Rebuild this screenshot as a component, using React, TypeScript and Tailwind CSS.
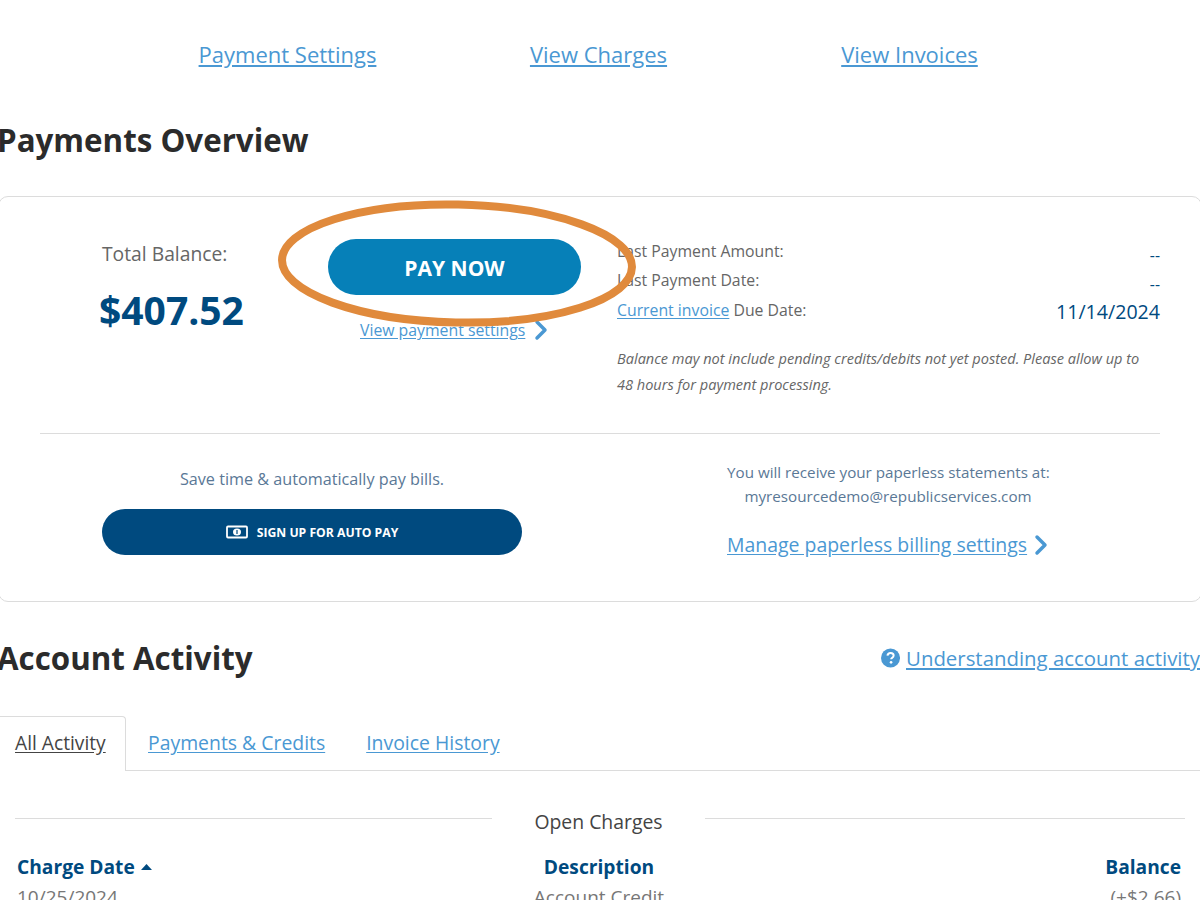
import React from 'react';
import { ChevronRight } from 'lucide-react';

const linkCls = 'text-[#4a98d3] underline underline-offset-2';

function CashIcon() {
  return (
    <svg width="22" height="14" viewBox="0 0 22 14" fill="none">
      <rect x="1" y="1.5" width="20" height="11" rx="1" stroke="white" strokeWidth="1.8" />
      <ellipse cx="11" cy="7" rx="4" ry="3.6" fill="white" />
      <rect x="10.4" y="5" width="1.2" height="4" fill="#004a7f" />
    </svg>
  );
}

function HelpIcon() {
  return (
    <svg width="20" height="20" viewBox="0 0 20 20">
      <circle cx="10" cy="10" r="10" fill="#4a98d3" />
      <path d="M6.8 7.6c.2-1.9 1.5-2.9 3.3-2.9 1.9 0 3.2 1.1 3.2 2.7 0 1.2-.6 1.8-1.6 2.4-.8.5-1 .8-1 1.6" fill="none" stroke="white" strokeWidth="2.1" />
      <circle cx="10.6" cy="14.6" r="1.4" fill="white" />
    </svg>
  );
}

export default function App() {
  return (
    <div className="relative w-[1200px] h-[900px] overflow-hidden bg-white font-['Open_Sans',sans-serif] text-[#333]">
      {/* top links */}
      <div className="grid grid-cols-3 w-[933px] ml-[132px] pt-[39px] text-center text-[22px] leading-[30px]">
        <div><a className={linkCls}>Payment Settings</a></div>
        <div><a className={linkCls}>View Charges</a></div>
        <div><a className={linkCls}>View Invoices</a></div>
      </div>

      <h1 className="ml-[-3px] mt-[48px] text-[31.3px] leading-[46px] font-bold text-[#2b2b2b] whitespace-nowrap">Payments Overview</h1>

      {/* overview card */}
      <div className="ml-[-2px] mt-[33px] w-[1204px] h-[406px] rounded-[10px] border border-[#dcdcdc] px-[41px]">
        <div className="flex h-[237px] border-b border-[#dcdcdc]">
          <div className="w-[288px] pl-[62px] pt-[43px]">
            <div className="text-[19.3px] leading-[28px] text-[#666]">Total Balance:</div>
            <div className="mt-[17px] text-[39px] leading-[50px] font-bold text-[#004a7f] ml-[-3px]">$407.52</div>
          </div>
          <div className="w-[253px] pt-[42px]">
            <button className="w-full h-[56px] pt-[3px] rounded-full bg-[#0680b8] text-white text-[21px] font-bold">PAY NOW</button>
            <div className="mt-[24px] h-[22px] flex items-center text-[15.8px] leading-[22px] ml-[32px] whitespace-nowrap">
              <a className={linkCls}>View payment settings</a>
              <ChevronRight className="w-[32px] h-[32px] shrink-0 text-[#4a98d3]" strokeWidth={2.6} />
            </div>
          </div>
          <div className="flex-1 ml-[36px] pt-[42px] text-[#666]">
            <div className="flex justify-between h-[24px] text-[15.8px] leading-[24px]">
              <span>Last Payment Amount:</span>
              <span className="text-[#004a7f] mt-[4px]">--</span>
            </div>
            <div className="flex justify-between h-[24px] text-[15.8px] leading-[24px] mt-[5px]">
              <span>Last Payment Date:</span>
              <span className="text-[#004a7f] mt-[4px]">--</span>
            </div>
            <div className="flex justify-between h-[24px] text-[15.8px] leading-[24px] mt-[6px]">
              <span><a className={linkCls}>Current invoice</a> Due Date:</span>
              <span className="text-[19.6px] text-[#004a7f] mt-[2px]">11/14/2024</span>
            </div>
            <p className="mt-[23px] text-[14.55px] leading-[26px] italic text-[#666] whitespace-nowrap">
              Balance may not include pending credits/debits not yet posted. Please allow up to
              <br />
              48 hours for payment processing.
            </p>
          </div>
        </div>
        <div className="flex">
          <div className="ml-[62px] w-[420px] pt-[32px]">
            <div className="text-center text-[16.2px] leading-[26px] text-[#5a7896]">Save time &amp; automatically pay bills.</div>
            <button className="mt-[17px] w-full h-[46px] rounded-full bg-[#004a7f] text-white text-[12.2px] font-bold flex items-center justify-center gap-[9px]">
              <CashIcon />
              <span className="mt-[3px]">SIGN UP FOR AUTO PAY</span>
            </button>
          </div>
          <div className="ml-[205px] pt-[26px] w-[322px] text-center text-[15.2px] leading-[24px] text-[#5a7896] whitespace-nowrap">
            <div>You will receive your paperless statements at:</div>
            <div>myresourcedemo@republicservices.com</div>
            <div className="mt-[22px] h-[30px] flex items-center text-[19.45px] leading-[30px]">
              <a className={linkCls}>Manage paperless billing settings</a>
              <ChevronRight className="ml-[-2px] w-[32px] h-[32px] shrink-0 text-[#4a98d3]" strokeWidth={2.6} />
            </div>
          </div>
        </div>
      </div>

      {/* account activity */}
      <div className="flex items-center justify-between ml-[-3px] mt-[33px] h-[46px]">
        <h2 className="text-[31.3px] leading-[46px] font-bold text-[#2b2b2b] whitespace-nowrap">Account Activity</h2>
        <div className="flex items-center gap-[6px] text-[20.4px] whitespace-nowrap w-[319px]">
          <HelpIcon />
          <a className={linkCls}>Understanding account activity</a>
        </div>
      </div>

      <div className="mt-[35px] flex h-[55px] border-b border-[#dcdcdc] text-[19.4px]">
        <div className="ml-[-6px] w-[132px] h-[55px] pl-[20px] pt-[11px] bg-white rounded-t-[4px] border border-b-0 border-[#dcdcdc]">
          <a className="text-[#444] text-[19.2px] underline underline-offset-2">All Activity</a>
        </div>
        <a className={`${linkCls} ml-[22px] mt-[12px] h-[30px]`}>Payments &amp; Credits</a>
        <a className={`${linkCls} ml-[41px] mt-[12px] h-[30px]`}>Invoice History</a>
      </div>

      <div className="mt-[37px] mx-[15px] flex items-center text-[19.4px] leading-[28px] text-[#444]">
        <div className="w-[477px] border-t border-[#dcdcdc] mt-[-8px]" />
        <div className="w-[213px] text-center">Open Charges</div>
        <div className="flex-1 border-t border-[#dcdcdc] mt-[-8px]" />
      </div>

      <div className="mt-[17px] ml-[17px] mr-[19px] grid grid-cols-[1fr_auto_1fr] text-[19.2px] leading-[28px] font-bold text-[#004a7f]">
        <div className="flex items-center gap-[6px]">
          Charge Date
          <svg width="11" height="6" viewBox="0 0 11 6"><path d="M5.5 0 11 6H0z" fill="#004a7f" /></svg>
        </div>
        <div>Description</div>
        <div className="text-right">Balance</div>
      </div>
      <div className="mt-[2px] ml-[17px] mr-[19px] grid grid-cols-[1fr_auto_1fr] text-[19px] leading-[28px] text-[#777]">
        <div>10/25/2024</div>
        <div>Account Credit</div>
        <div className="text-right">(+$2.66)</div>
      </div>

      {/* hand-drawn highlight over the button */}
      <svg className="absolute left-[270px] top-[192px] pointer-events-none" width="380" height="142" viewBox="0 0 380 142">
        <ellipse cx="187" cy="71.5" rx="175" ry="59" fill="none" stroke="#e08a3c" strokeWidth="8" transform="rotate(1.2 187 71.5)" />
      </svg>
    </div>
  );
}
